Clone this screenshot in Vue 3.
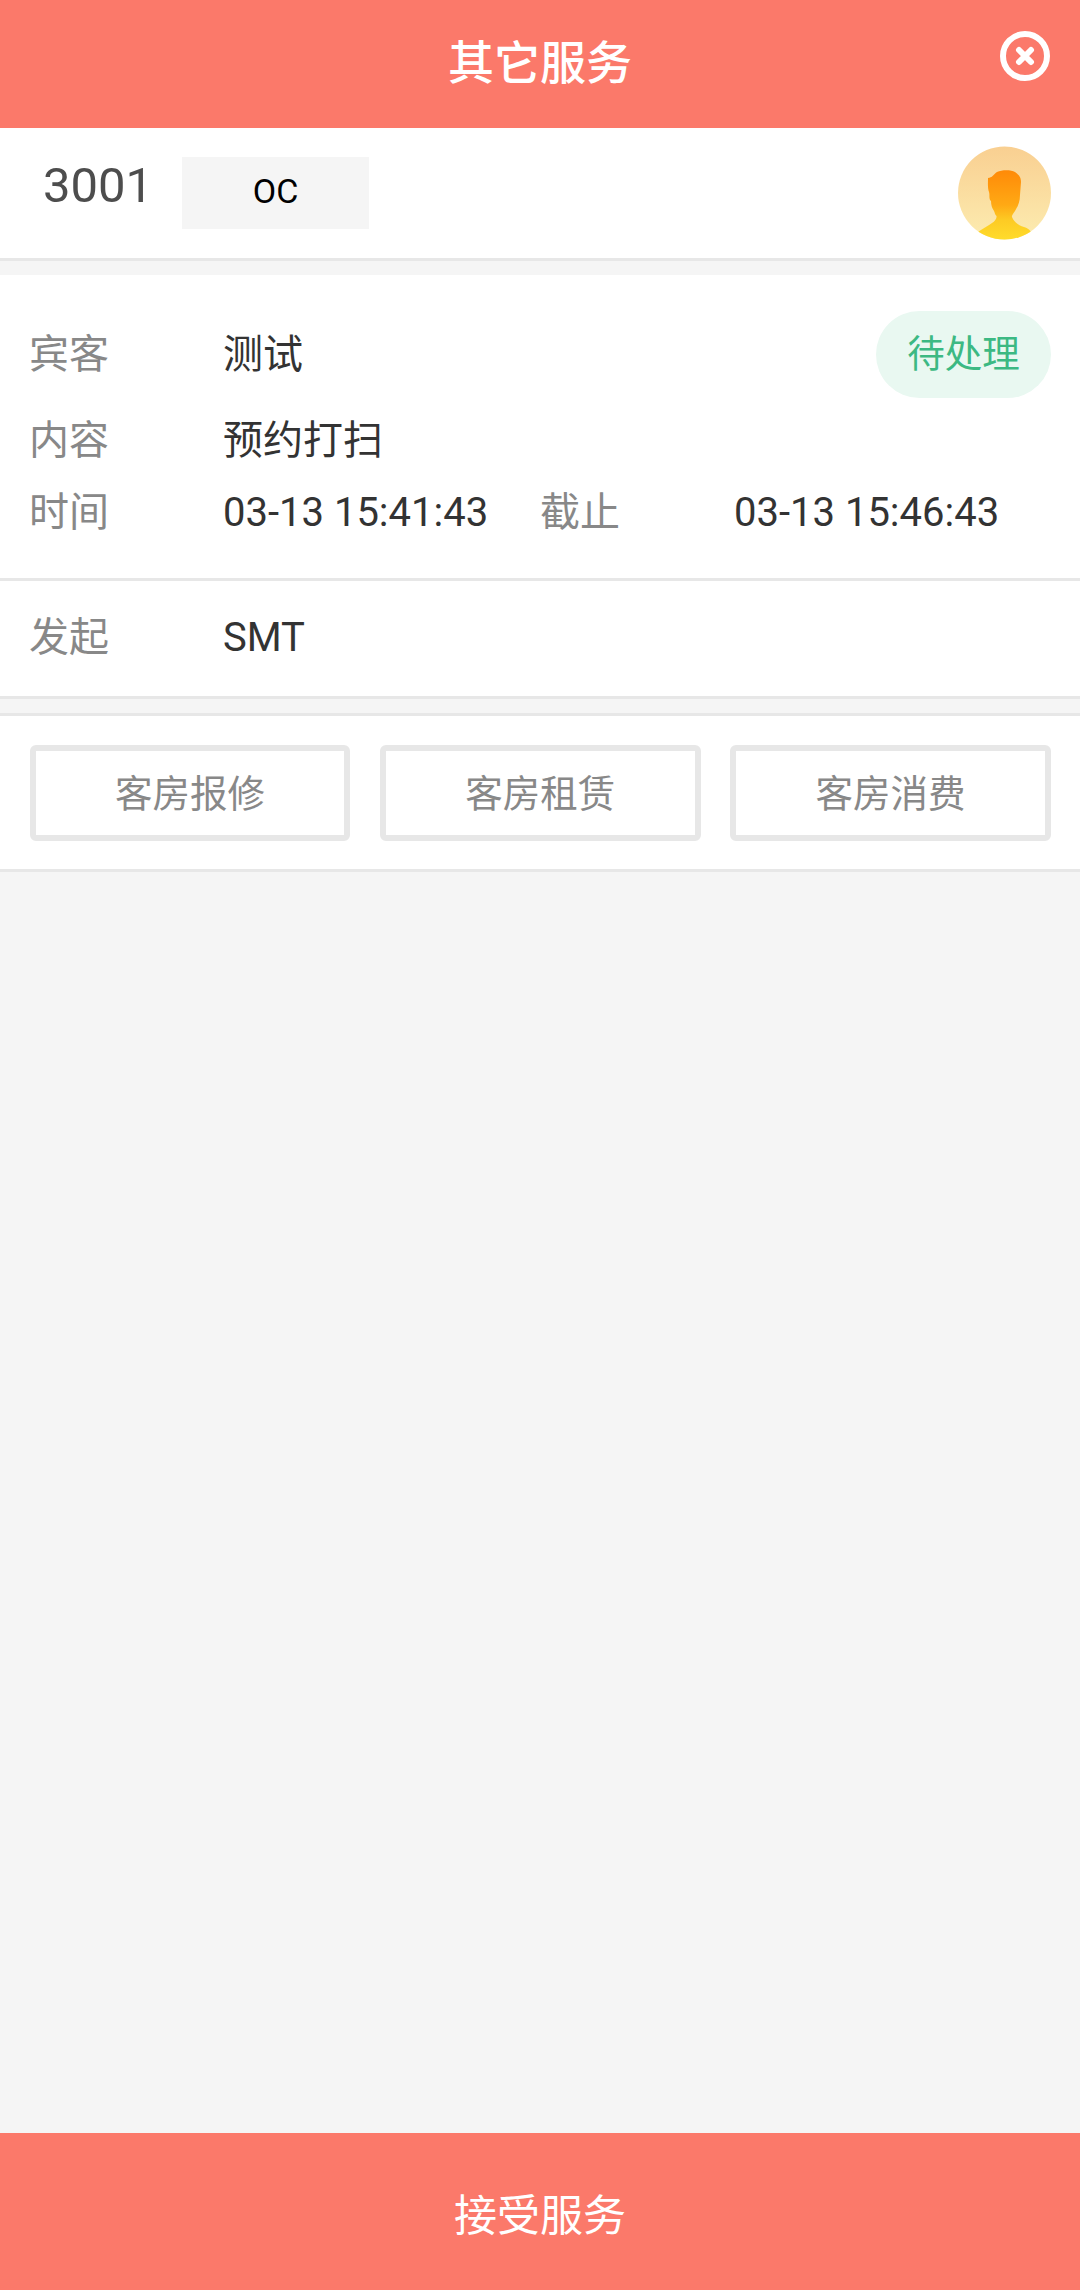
<script setup>
const actions = ['客房报修', '客房租赁', '客房消费']
</script>

<template>
  <div class="page">
    <header class="header">
      <h1>其它服务</h1>
      <button class="close" aria-label="关闭">
        <svg viewBox="0 0 50 50" width="50" height="50" fill="none" stroke="#fff" stroke-width="6" stroke-linecap="round">
          <circle cx="25" cy="25" r="22" />
          <path d="M19 19 31 31M31 19 19 31" />
        </svg>
      </button>
    </header>

    <section class="room">
      <span class="number">3001</span>
      <span class="state">OC</span>
      <svg class="avatar" viewBox="0 0 94 94" width="94" height="94">
        <defs>
          <linearGradient id="disc" x1="0" y1="0" x2="0" y2="1">
            <stop offset="0" stop-color="#f9cf91" />
            <stop offset="1" stop-color="#fcecb0" />
          </linearGradient>
          <linearGradient id="person" x1="0" y1="0" x2="0" y2="1">
            <stop offset="0" stop-color="#ff8a08" />
            <stop offset="0.5" stop-color="#ffa914" />
            <stop offset="0.72" stop-color="#fdcb24" />
            <stop offset="1" stop-color="#ffdc2c" />
          </linearGradient>
          <clipPath id="round"><circle cx="46.500" cy="47" r="46.500" /></clipPath>
        </defs>
        <g clip-path="url(#round)">
          <rect width="94" height="94" fill="url(#disc)" />
          <path
            fill="url(#person)"
            d="M30 32C34 32 36 28 39 26C44 23.500 53 23.500 57 26C61 29 63 31 63 36L62 49C62 56 60 60 57 65C55 68 53.500 70 54 71C56 76 60 79 66 81C69 82 71 83 73 86V94H20V86C24 83 30 80 34 77C37 75 39 72 38.500 70C37 69 37 67 36 65C34 62 33 59 33 55C30.500 53 32 49 31 46C29.500 42 30 37 30 32Z"
          />
        </g>
      </svg>
    </section>

    <section class="details">
      <div class="row guest">
        <span class="label">宾客</span>
        <span class="value">测试</span>
        <span class="badge">待处理</span>
      </div>
      <div class="row content">
        <span class="label">内容</span>
        <span class="value">预约打扫</span>
      </div>
      <div class="row time">
        <span class="label">时间</span>
        <span class="value start">03-13 15:41:43</span>
        <span class="label">截止</span>
        <span class="value">03-13 15:46:43</span>
      </div>
    </section>

    <section class="row origin">
      <span class="label">发起</span>
      <span class="value">SMT</span>
    </section>

    <section class="actions">
      <button v-for="action in actions" :key="action">{{ action }}</button>
    </section>

    <button class="accept">接受服务</button>
  </div>
</template>

<style>
body {
  margin: 0;
  background: #fff;
}
</style>

<style scoped>
.page {
  box-sizing: border-box;
  width: 1080px;
  height: 2290px;
  display: flex;
  flex-direction: column;
  background: #f5f5f5;
  font-family: Roboto, "Noto Sans CJK SC", sans-serif;
  color: #333;
}
.page * {
  box-sizing: border-box;
}
button {
  font-family: inherit;
  padding: 0;
  border: 0;
  background: none;
}
.header {
  flex: none;
  height: 128px;
  display: grid;
  grid-template-columns: 1fr auto 1fr;
  background: #fb796a;
  color: #fff;
}
h1 {
  grid-column: 2;
  margin: 0;
  font-size: 46px;
  font-weight: 500;
  line-height: 126px;
}
.close {
  justify-self: end;
  width: 50px;
  height: 50px;
  margin: 31px 30px 0 0;
}
.close svg,
.avatar {
  display: block;
}
.room {
  flex: none;
  height: 133px;
  display: flex;
  align-items: flex-start;
  padding: 0 28px 0 43px;
  border-bottom: 3px solid #e7e7e7;
  background: #fff;
}
.number {
  width: 139px;
  padding-top: 29px;
  font-size: 49px;
  line-height: 58px;
  color: #4d4d4d;
}
.state {
  width: 187px;
  height: 72px;
  margin-top: 29px;
  font-size: 34px;
  line-height: 69px;
  text-align: center;
  background: #f5f5f5;
  color: #000;
}
.avatar {
  margin: 18px 0 0 auto;
}
.details {
  flex: none;
  height: 306px;
  margin-top: 14px;
  padding-top: 36px;
  border-bottom: 3px solid #e7e7e7;
  background: #fff;
}
.row {
  display: flex;
  align-items: center;
  padding: 0 29px;
  font-size: 40px;
  line-height: 48px;
}
.label {
  width: 194px;
  color: #888;
}
.guest {
  height: 87px;
}
.content {
  height: 86px;
}
.time {
  height: 58px;
}
.start {
  width: 317px;
}
.badge {
  width: 175px;
  height: 87px;
  margin-left: auto;
  border-radius: 44px;
  font-size: 37.5px;
  line-height: 87px;
  text-align: center;
  background: #e9f8f1;
  color: #3cb983;
}
.origin {
  flex: none;
  height: 118px;
  padding-bottom: 2px;
  border-bottom: 3px solid #e7e7e7;
  background: #fff;
}
.actions {
  flex: none;
  height: 159px;
  margin-top: 14px;
  display: grid;
  grid-template-columns: repeat(3, 1fr);
  gap: 29.500px;
  padding: 29px 29px 0 29.500px;
  border: solid #e7e7e7;
  border-width: 3px 0;
  background: #fff;
}
.actions button {
  height: 96px;
  border: 6px solid #e7e7e7;
  border-radius: 6px;
  padding-top: 2px;
  font-size: 37.5px;
  line-height: 82px;
  color: #888;
}
.accept {
  height: 157px;
  margin-top: auto;
  font-size: 43px;
  background: #fb796a;
  color: #fff;
}
</style>
